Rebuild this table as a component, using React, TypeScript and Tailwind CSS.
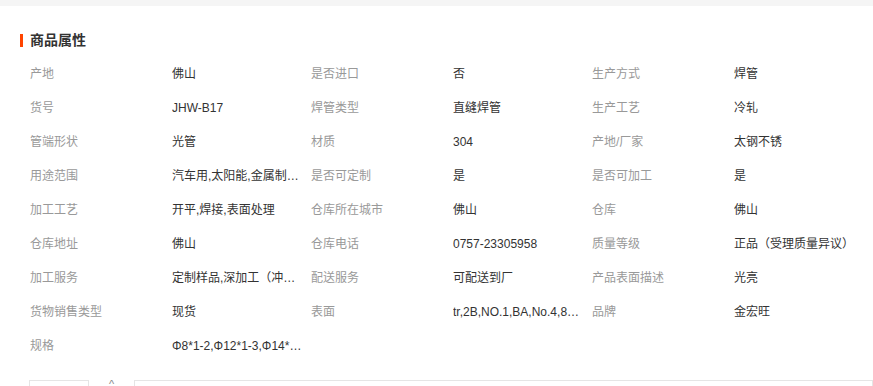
const rows: [string, string][][] = [
  [["产地", "佛山"], ["是否进口", "否"], ["生产方式", "焊管"]],
  [["货号", "JHW-B17"], ["焊管类型", "直缝焊管"], ["生产工艺", "冷轧"]],
  [["管端形状", "光管"], ["材质", "304"], ["产地/厂家", "太钢不锈"]],
  [["用途范围", "汽车用,太阳能,金属制品,家具制造"], ["是否可定制", "是"], ["是否可加工", "是"]],
  [["加工工艺", "开平,焊接,表面处理"], ["仓库所在城市", "佛山"], ["仓库", "佛山"]],
  [["仓库地址", "佛山"], ["仓库电话", "0757-23305958"], ["质量等级", "正品（受理质量异议）"]],
  [["加工服务", "定制样品,深加工（冲压）"], ["配送服务", "可配送到厂"], ["产品表面描述", "光亮"]],
  [["货物销售类型", "现货"], ["表面", "tr,2B,NO.1,BA,No.4,8K,拉丝"], ["品牌", "金宏旺"]],
  [["规格", "Φ8*1-2,Φ12*1-3,Φ14*1-3"]],
];

export default function App() {
  return (
    <div
      className="h-[386px] w-[873px] overflow-hidden bg-white text-[12px]"
      style={{ fontFamily: '"Liberation Sans", "Noto Sans CJK SC", sans-serif' }}
    >
      <div className="h-[6px] bg-[#f5f5f5]" />
      <div className="flex h-[50px] items-end pb-[5px] pl-[20px]">
        <span className="mr-[7px] mb-[4px] h-[13px] w-[3px] bg-[#ff4400]" />
        <h2 className="text-[14px] font-bold leading-[22px] text-[#333]">商品属性</h2>
      </div>
      <div className="px-[30px] pt-[1px]">
        {rows.map((row, i) => (
          <div key={i} className="flex h-[34px] items-center">
            {row.map(([k, v]) => (
              <div key={k} className="flex w-[281px] shrink-0">
                <span className="w-[142px] shrink-0 text-[#999]">{k}</span>
                <span className="w-[132px] truncate text-[#333]">{v}</span>
              </div>
            ))}
          </div>
        ))}
      </div>
      <div className="mt-[17px] flex items-start">
        <div className="ml-[29px] h-[20px] w-[60px] border border-[#e5e5e5]" />
        <span className="ml-[20px] mt-[-1px] text-[11px] leading-none text-[#888]">^</span>
        <div className="ml-[20px] h-[20px] flex-1 border border-[#e5e5e5]" />
      </div>
    </div>
  );
}
